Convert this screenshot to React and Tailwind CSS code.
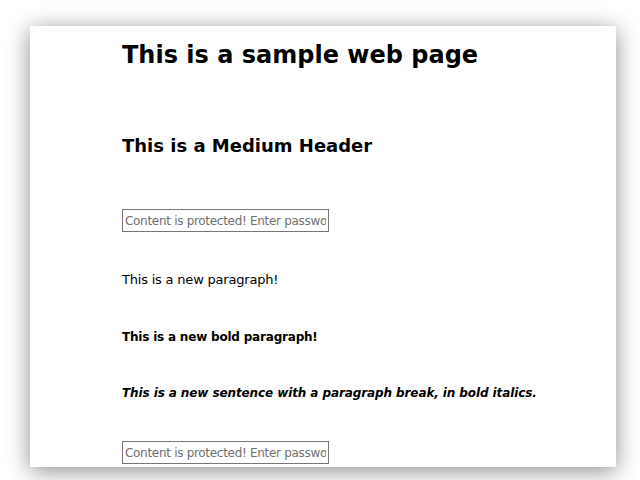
import React from 'react';

function ProtectedInput() {
  return (
    <input
      type="password"
      placeholder="Content is protected! Enter password"
      className="block w-[207px] h-[23px] border border-[#767676] px-[2px] text-[12px] tracking-[-0.3px] text-black placeholder:text-[#6f6f6f] outline-none"
      style={{ fontFamily: "'DejaVu Sans', Verdana, sans-serif" }}
    />
  );
}

export default function App() {
  return (
    <div className="w-[640px] h-[480px] bg-white overflow-hidden pt-[26px] pl-[30px]">
      <div
        className="w-[586px] h-[441px] bg-white shadow-[0_4px_22px_rgba(0,0,0,0.45)] pl-[92px] text-black"
        style={{ fontFamily: "'DejaVu Sans', Verdana, sans-serif" }}
      >
        <h1 className="text-[24px] font-bold leading-[30px] pt-[14px]">This is a sample web page</h1>
        <h2 className="text-[18px] font-bold leading-[22px] mt-[65px]">This is a Medium Header</h2>
        <div className="mt-[52px]">
          <ProtectedInput />
        </div>
        <p className="text-[13px] leading-[16px] tracking-[-0.2px] mt-[40px]">This is a new paragraph!</p>
        <p className="text-[12px] leading-[16px] tracking-[-0.2px] font-bold mt-[41px]">This is a new bold paragraph!</p>
        <p className="text-[12px] leading-[16px] tracking-[-0.1px] font-bold italic mt-[40px]">
          This is a new sentence with a paragraph break, in bold italics.
        </p>
        <div className="mt-[40px]">
          <ProtectedInput />
        </div>
      </div>
    </div>
  );
}
